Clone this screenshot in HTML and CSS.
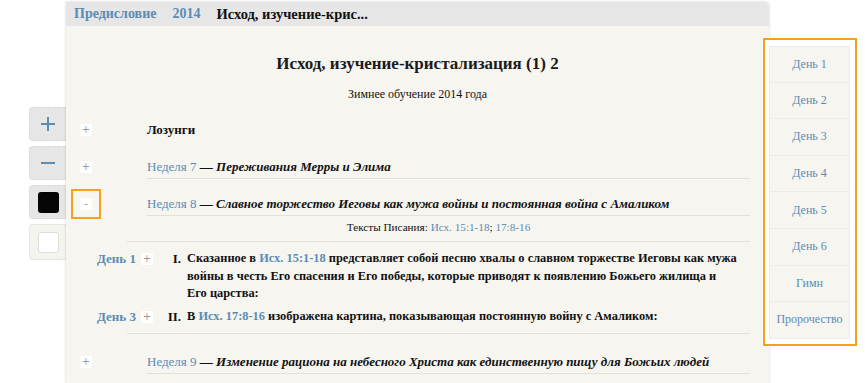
FILE: index.html
```html
<!DOCTYPE html>
<html lang="ru">
<head>
    <meta charset="UTF-8">
    <title>Исход, изучение-кристализация (1) 2</title>
    <link rel="stylesheet" href="styles.css">
</head>
<body>
    <div id="app">
        <div class="tools">
            <div class="tool">
                <svg width="16" height="16" viewBox="0 0 16 16"><path d="M8 1v14M1 8h14" stroke="#5b8cb2" stroke-width="2" fill="none"/></svg>
            </div>
            <div class="tool">
                <svg width="16" height="16" viewBox="0 0 16 16"><path d="M1 8h14" stroke="#5b8cb2" stroke-width="2" fill="none"/></svg>
            </div>
            <div class="tool">
                <span class="swatch swatch-black"></span>
            </div>
            <div class="tool tool-light">
                <span class="swatch swatch-white"></span>
            </div>
        </div>

        <div class="page">
            <div class="crumbs">
                <a class="crumb">Предисловие</a>
                <a class="crumb">2014</a>
                <span class="crumb crumb-current">Исход, изучение-крис...</span>
            </div>
            <div class="doc">
                <h1 class="title">Исход, изучение-кристализация (1) 2</h1>
                <p class="sub">Зимнее обучение 2014 года</p>

                <div class="row row-first">
                    <span class="toggle-cell"><span class="toggle">+</span></span>
                    <div class="row-text row-plain"><b>Лозунги</b></div>
                </div>
                <div class="row">
                    <span class="toggle-cell"><span class="toggle">+</span></span>
                    <div class="row-text"><a class="week">Неделя 7</a> <b>—</b> <b><i>Переживания Мерры и Элима</i></b></div>
                </div>
                <div class="row">
                    <span class="toggle-cell"><span class="toggle toggle-active">-</span></span>
                    <div class="row-text"><a class="week">Неделя 8</a> <b>—</b> <b><i>Славное торжество Иеговы как мужа войны и постоянная война с Амаликом</i></b></div>
                </div>

                <p class="verses">Тексты Писания: <a>Исх. 15:1-18</a>; <a>17:8-16</a></p>

                <div class="outline">
                    <div class="point">
                        <a class="day">День 1</a>
                        <span class="toggle">+</span>
                        <span class="num">I.</span>
                        <div class="point-text">Сказанное в <a>Исх. 15:1-18</a> представляет собой песню хвалы о славном торжестве Иеговы как мужа войны в честь Его спасения и Его победы, которые приводят к появлению Божьего жилища и Его царства:</div>
                    </div>
                    <div class="point point-next">
                        <a class="day">День 3</a>
                        <span class="toggle">+</span>
                        <span class="num">II.</span>
                        <div class="point-text">В <a>Исх. 17:8-16</a> изображена картина, показывающая постоянную войну с Амаликом:</div>
                    </div>
                </div>

                <div class="row row-last">
                    <span class="toggle-cell"><span class="toggle">+</span></span>
                    <div class="row-text"><a class="week">Неделя 9</a> <b>—</b> <b><i>Изменение рациона на небесного Христа как единственную пищу для Божьих людей</i></b></div>
                </div>
            </div>
        </div>

        <div class="side">
            <ul class="days">
                <li><a>День 1</a></li>
                <li><a>День 2</a></li>
                <li><a>День 3</a></li>
                <li><a>День 4</a></li>
                <li><a>День 5</a></li>
                <li><a>День 6</a></li>
                <li><a>Гимн</a></li>
                <li><a>Пророчество</a></li>
            </ul>
        </div>
    </div>
</body>
</html>
```

FILE: styles.css
```css
*{
    padding:0;
    margin:0;
    box-sizing: border-box;
}
html,body{
    background:#fff;
    height:100%;
    overflow:hidden;
}
body{
    font-family: "Liberation Serif", "DejaVu Serif", serif;
    color:#111;
}
a{
    color:#5b8cb2;
    text-decoration:none;
}
#app{
    display:flex;
    align-items:flex-start;
    height:100%;
}

/* left tools */
.tools{
    margin-left:29px;
    padding-top:107px;
    width:37px;
    display:flex;
    flex-direction:column;
    gap:5px;
}
.tool{
    height:34px;
    background:#e6e6e6;
    border:1px dashed #dadada;
    border-right:none;
    border-radius:4px 0 0 4px;
    display:flex;
    align-items:center;
    justify-content:center;
}
.tool-light{
    height:36px;
    background:#f4f4ef;
    border:1px solid #e6e6e6;
    border-right:none;
}
.swatch{
    width:21px;
    height:21px;
    border-radius:3px;
}
.swatch-black{
    background:#060606;
}
.swatch-white{
    background:#fff;
    border:1px solid #ddd;
}

/* page */
.page{
    width:703px;
    height:100%;
    margin-top:2px;
    background:#f6f5f0;
    box-shadow:0 0 3px rgba(0,0,0,.18);
    border-radius:0 4px 0 0;
}
.crumbs{
    height:24px;
    background:#e6e6e6;
    border-radius:0 4px 0 0;
    display:flex;
    align-items:center;
    gap:16px;
    padding-left:8px;
    font-weight:bold;
    font-size:14px;
}
.crumb-current{
    color:#111;
    font-size:14.5px;
}
.doc{
    padding-top:28px;
}
.title{
    text-align:center;
    font-size:17px;
    line-height:20px;
    color:#1a1a1a;
}
.sub{
    text-align:center;
    font-size:12px;
    line-height:16px;
    margin-top:12px;
}

/* week rows */
.row{
    display:flex;
    align-items:flex-start;
    margin-top:16px;
    font-size:13px;
}
.row-first{
    margin-top:19px;
}
.row-last{
    margin-top:19px;
}
.toggle-cell{
    width:81px;
    padding-left:14px;
    height:18px;
    display:flex;
    align-items:center;
}
.row-text{
    flex:1;
    margin-right:19px;
    line-height:18px;
    padding-bottom:2px;
    border-bottom:1px solid #e2e1dc;
}
.row-plain{
    border-bottom-color:transparent;
}
.toggle{
    display:inline-block;
    width:12px;
    height:12px;
    background:#fff;
    border-radius:2px;
    color:#999;
    font-family:"DejaVu Sans", sans-serif;
    font-size:10px;
    line-height:12px;
    text-align:center;
}
.toggle-active{
    border-radius:0;
    outline:2px solid #f7a01b;
    outline-offset:7px;
}
.verses{
    text-align:center;
    font-size:11.2px;
    line-height:16px;
    margin:3px 19px 0 61px;
}

/* outline */
.outline{
    margin:6px 19px 0 61px;
    padding:8px 0 8px;
    border-top:1px solid #e2e1dc;
    border-bottom:1px solid #e2e1dc;
    font-size:13px;
}
.point{
    display:grid;
    grid-template-columns:44px 12px 28px 1fr;
    margin-left:-30px;
    line-height:17.5px;
}
.point-next{
    margin-top:5px;
}
.day{
    font-weight:bold;
}
.point .toggle{
    margin-top:3px;
}
.num{
    font-weight:bold;
    text-align:right;
}
.point-text{
    font-weight:bold;
    font-size:12.4px;
    padding-left:6px;
    padding-right:13px;
}

/* right menu */
.side{
    margin-left:-6px;
    margin-top:38px;
    width:94px;
    border:2px solid #f7a01b;
    padding:6px 5px 5px 4px;
    background:#fff;
}
.days{
    list-style:none;
}
.days li{
    height:36.6px;
    display:flex;
    align-items:center;
    justify-content:center;
    background:#f6f5f0;
    border:1px solid #ebebeb;
    font-size:12px;
}
.days li + li{
    border-top:none;
}
```
